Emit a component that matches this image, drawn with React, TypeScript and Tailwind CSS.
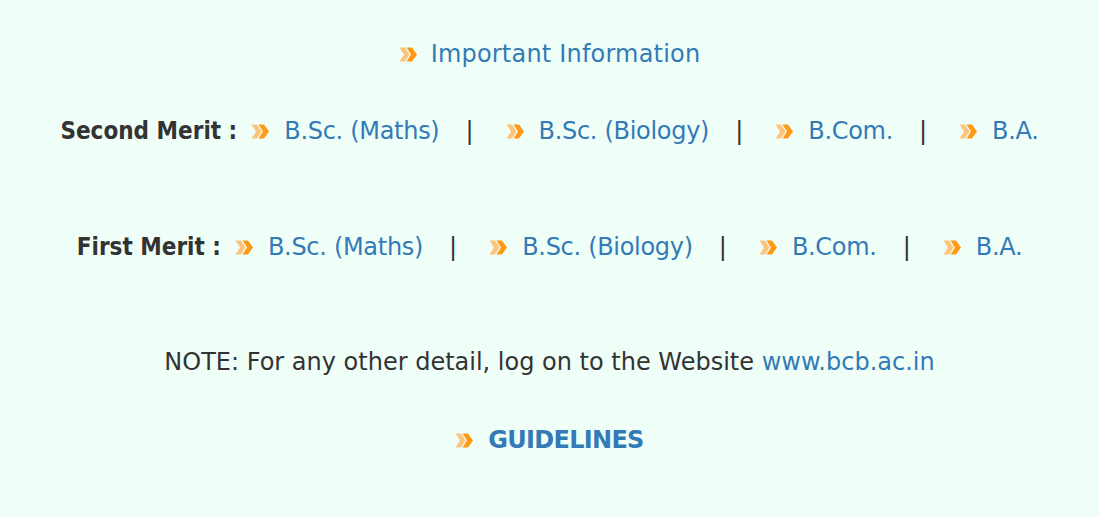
import React from "react";

function Arrow() {
  return (
    <svg width="19" height="17" viewBox="0 0 19 17" className="shrink-0">
      <path d="M0.5 1.5 L6 1.5 L10.5 8.5 L6 15.5 L0.5 15.5 L5 8.5 Z" fill="#ffc47c" />
      <path d="M7.5 1.5 L13 1.5 L18 8.5 L13 15.5 L7.5 15.5 L12 8.5 Z" fill="#ff9a17" />
    </svg>
  );
}

function Sep() {
  return <span className="ml-[26px] mr-[32px] text-[#333]">|</span>;
}

function Item({ label, first }: { label: string; first?: boolean }) {
  return (
    <span className={"flex items-center " + (first ? "ml-[14px]" : "")}>
      <Arrow />
      <a className="ml-[14px] text-[#337ab7] tracking-[-0.3px]">{label}</a>
    </span>
  );
}

function MeritRow({ title }: { title: string }) {
  return (
    <div className="flex items-center justify-center">
      <span
        className="font-bold text-[#333]"
        style={{ fontFamily: '"DejaVu Sans Condensed", "DejaVu Sans", sans-serif' }}
      >
        {title}
      </span>
      <Item label="B.Sc. (Maths)" first />
      <Sep />
      <Item label="B.Sc. (Biology)" />
      <Sep />
      <Item label="B.Com." />
      <Sep />
      <Item label="B.A." />
    </div>
  );
}

export default function App() {
  return (
    <div
      className="w-[1099px] h-[517px] bg-[#effff7] text-[24px] leading-none flex flex-col items-center"
      style={{ fontFamily: '"DejaVu Sans", sans-serif' }}
    >
      <div className="mt-[42px] flex items-center">
        <Arrow />
        <span className="ml-[13px] text-[#337ab7] tracking-[0.2px]">Important Information</span>
      </div>
      <div className="mt-[53px]">
        <MeritRow title="Second Merit :" />
      </div>
      <div className="mt-[92px]">
        <MeritRow title="First Merit :" />
      </div>
      <div className="mt-[91px] text-[#333]">
        NOTE: For any other detail, log on to the Website{" "}
        <a className="text-[#337ab7]">www.bcb.ac.in</a>
      </div>
      <div className="mt-[54px] flex items-center">
        <Arrow />
        <span className="ml-[14px] font-bold text-[#337ab7] tracking-[-0.7px]">GUIDELINES</span>
      </div>
    </div>
  );
}
